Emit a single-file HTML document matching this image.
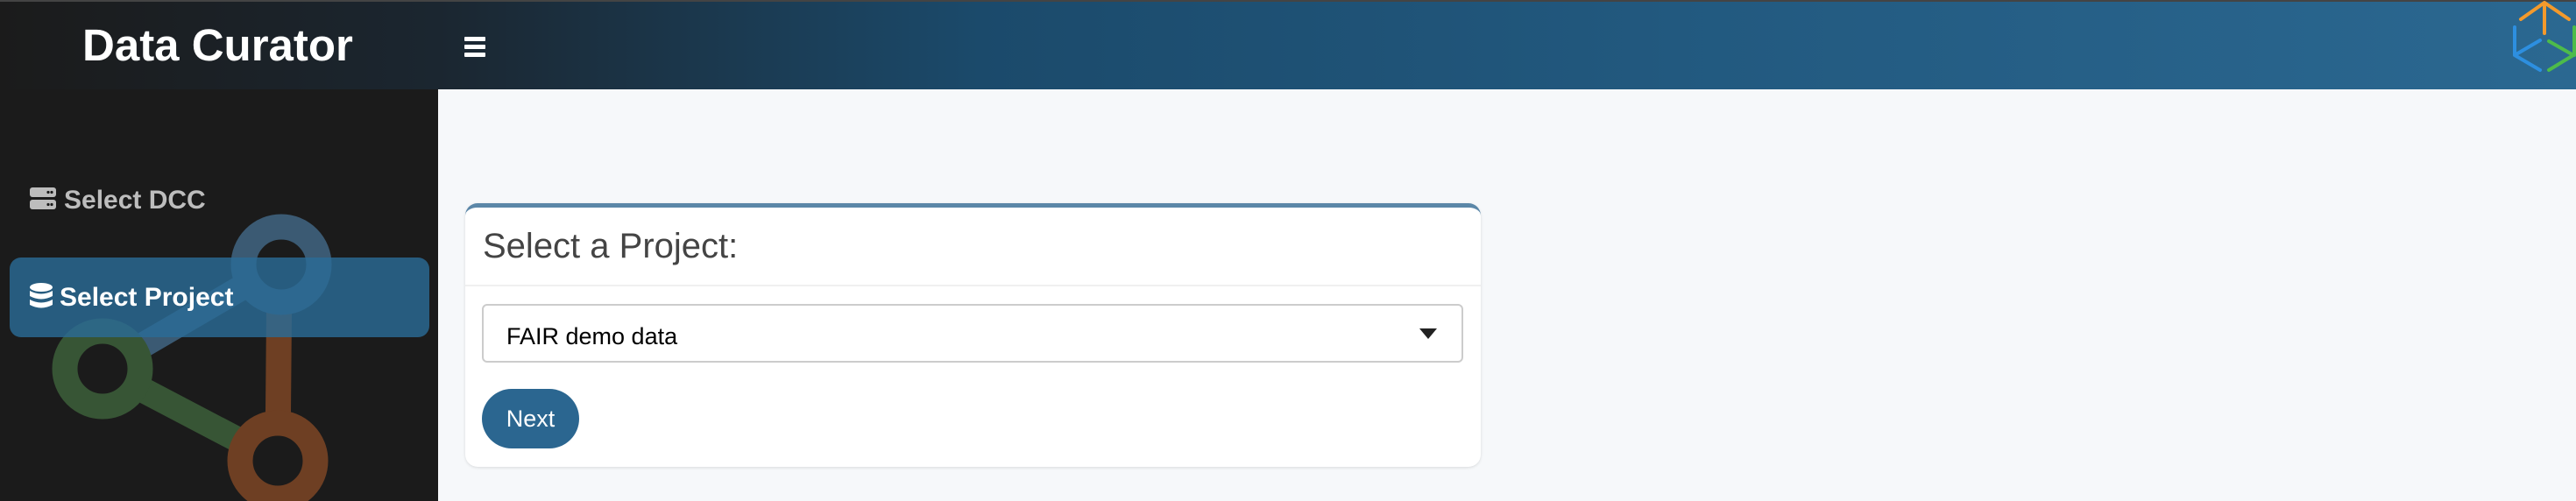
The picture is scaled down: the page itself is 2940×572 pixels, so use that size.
<!DOCTYPE html>
<html><head><meta charset="utf-8"><style>
*{margin:0;padding:0;box-sizing:border-box}
body{width:2940px;height:572px;overflow:hidden;background:#f6f8fa;font-family:"Liberation Sans",sans-serif;position:relative}
.top{position:absolute;left:0;top:0;width:2940px;height:2px;background:#444}
.hdr{position:absolute;left:0;top:2px;width:2940px;height:100px;background:linear-gradient(90deg,#1b1b1b 0%,#1b2630 17%,#1b4a6b 38%,#22597f 65%,#2b6891 100%)}
.title{position:absolute;left:94px;top:20px;color:#fff;font-weight:bold;font-size:51px}
.ham{position:absolute;left:530px;top:40px}
.ham div{width:24px;height:5px;background:#fff;margin-bottom:4px;border-radius:1px}
.side{position:absolute;left:0;top:102px;width:500px;height:470px;background:#1b1b1b;overflow:hidden}
.item{position:absolute;color:#bdbdbd;font-weight:bold;font-size:30px}
.active{position:absolute;left:11px;top:192px;width:479px;height:91px;background:rgba(43,107,150,0.82);border-radius:13px}
.card{position:absolute;left:531px;top:232px;width:1159px;height:301px;background:#fff;border-radius:14px;border-top:5px solid #5b87a8;box-shadow:0 1px 3px rgba(0,0,0,.12)}
.ch{position:absolute;left:20px;top:22px;font-size:40px;color:#444}
.div{position:absolute;left:0;top:88px;width:100%;height:2px;background:#f0f0f0}
.sel{position:absolute;left:19px;top:110px;width:1120px;height:67px;border:2px solid #ccc;border-radius:6px;font-size:27px;color:#000;padding:20px 0 0 26px}
.arr{position:absolute;right:28px;top:26px;width:0;height:0;border-left:10px solid transparent;border-right:10px solid transparent;border-top:12px solid #222}
.btn{position:absolute;left:19px;top:207px;width:111px;height:68px;background:#2b6690;border-radius:34px;color:#fff;font-size:27px;text-align:center;line-height:68px}
</style></head><body>
<div class="top"></div>
<div class="hdr">
<div class="title">Data Curator</div>
<div class="ham"><div></div><div></div><div></div></div>
<svg style="position:absolute;left:2860px;top:-2px" width="80" height="90" viewBox="2860 0 80 90" fill="none" stroke-width="4" stroke-linecap="round" stroke-linejoin="round">
<path d="M2877 22 L2904 3 L2932 22 M2904 3 V38" stroke="#f39a2c"/>
<path d="M2870 31 V63 M2899 46 L2870 63 L2899 80" stroke="#2d8fe0"/>
<path d="M2938 31 V63 M2909 47 L2937 63 L2909 80" stroke="#4dbb4a"/>
</svg>
</div>
<div class="side">
<svg style="position:absolute;left:0;top:0" width="500" height="470">
<g stroke-width="29">
<line x1="117" y1="319" x2="321" y2="200" stroke="#3b5a73"/>
<line x1="117" y1="319" x2="317" y2="424" stroke="#375535"/>
<line x1="319" y1="200" x2="317" y2="424" stroke="#6e3f23"/>
<circle cx="321" cy="200" r="43" stroke="#3b5a73" fill="#1b1b1b"/>
<circle cx="117" cy="319" r="43" stroke="#375535" fill="#1b1b1b"/>
<circle cx="317" cy="424" r="43" stroke="#6e3f23" fill="#1b1b1b"/>
</g></svg>
<div class="active"></div>
<div class="item" style="left:34px;top:110px">
<svg width="30" height="28" style="vertical-align:-3px;margin-right:9px"><rect x="0" y="1" width="30" height="11" rx="3" fill="#bdbdbd"/><rect x="0" y="15" width="30" height="11" rx="3" fill="#bdbdbd"/><circle cx="21" cy="6.5" r="1.6" fill="#1b1b1b"/><circle cx="25" cy="6.5" r="1.6" fill="#1b1b1b"/><circle cx="21" cy="20.5" r="1.6" fill="#1b1b1b"/><circle cx="25" cy="20.5" r="1.6" fill="#1b1b1b"/></svg>Select DCC</div>
<div class="item" style="left:34px;top:221px;color:#fff">
<svg width="26" height="30" style="vertical-align:-4px;margin-right:8px"><ellipse cx="13" cy="5" rx="13" ry="5" fill="#fff"/><path d="M0 9 Q13 16 26 9 V15 Q13 22 0 15Z M0 19 Q13 26 26 19 V25 Q13 32 0 25Z" fill="#fff"/></svg>Select Project</div>
</div>
<div class="card">
<div class="ch">Select a Project:</div>
<div class="div"></div>
<div class="sel">FAIR demo data<div class="arr"></div></div>
<div class="btn">Next</div>
</div>
</body></html>
